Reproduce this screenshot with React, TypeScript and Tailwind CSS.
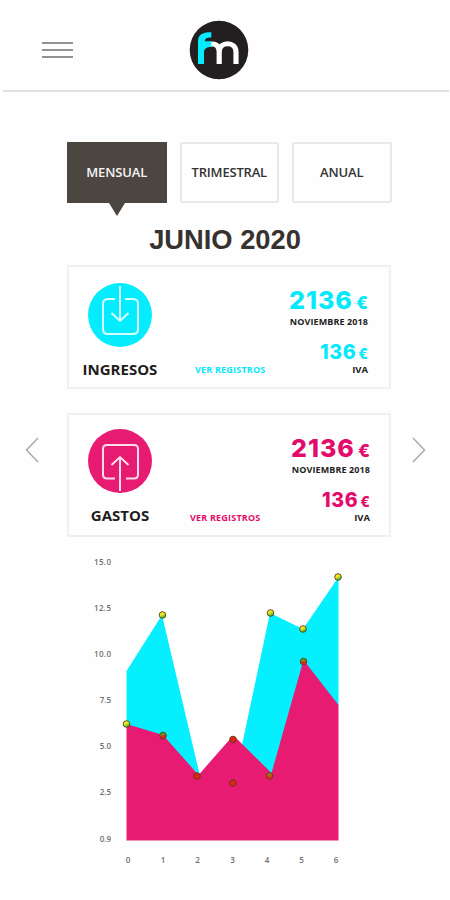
import { useState } from "react";

type Movement = {
  label: string;
  kind: "in" | "out";
  total: string;
  month: string;
  iva: string;
  text: string;
  circle: string;
  card: string;
  link: string;
  side: string;
};

const tabs = [
  { name: "MENSUAL", tracking: "tracking-[-0.1px]" },
  { name: "TRIMESTRAL", tracking: "tracking-[-0.2px]" },
  { name: "ANUAL", tracking: "tracking-[-0.1px]" },
];

const movements: Movement[] = [
  {
    label: "INGRESOS",
    kind: "in",
    total: "2136",
    month: "NOVIEMBRE 2018",
    iva: "136",
    text: "text-[#05e9fb]",
    circle: "bg-[#05ecfe]",
    card: "pt-[16px]",
    link: "ml-[24px]",
    side: "pr-[21px] pt-[3px]",
  },
  {
    label: "GASTOS",
    kind: "out",
    total: "2136",
    month: "NOVIEMBRE 2018",
    iva: "136",
    text: "text-[#e30b6b]",
    circle: "bg-[#e81b73]",
    card: "pt-[14px]",
    link: "ml-[19px]",
    side: "pr-[19px] pt-[5px]",
  },
];

const yAxis = [
  { label: "15.0", y: 15 },
  { label: "12.5", y: 61 },
  { label: "10.0", y: 107 },
  { label: "7.5", y: 153 },
  { label: "5.0", y: 199 },
  { label: "2.5", y: 245 },
  { label: "0.9", y: 292 },
];

const xAxis = [128, 163, 197.5, 232.5, 267, 301.5, 336];

const dots = [
  { x: 126.5, y: 174, fill: "url(#dotYellow)" },
  { x: 162.5, y: 65, fill: "url(#dotYellow)" },
  { x: 270.5, y: 63, fill: "url(#dotYellow)" },
  { x: 303, y: 79, fill: "url(#dotYellow)" },
  { x: 338, y: 27, fill: "url(#dotYellow)" },
  { x: 163, y: 185.5, fill: "url(#dotGreen)" },
  { x: 303.5, y: 111.5, fill: "url(#dotGreen)" },
  { x: 197, y: 226, fill: "#df2413" },
  { x: 233, y: 189.5, fill: "#df2413" },
  { x: 233, y: 233, fill: "#df2413" },
  { x: 269.5, y: 226, fill: "url(#dotOrange)" },
];

function Logo() {
  return (
    <svg width="60" height="60" viewBox="0 0 60 60" fill="none">
      <circle cx="30" cy="30" r="29.3" fill="#231f20" />
      <path d="M21 24.3 C27 23 30.2 26 30.2 32 V44 M30.2 32 C30.2 21 47 21 47 32 V44" stroke="#fff" strokeWidth="5.2" />
      <path d="M9 44 V21 C9 14.5 14 12 22.3 12.2 V17.5 C18 17.4 16 18.4 15.7 21.2 H22.3 V27 C17.5 27 15 29 15 32 V44 Z" fill="#05ecfe" />
    </svg>
  );
}

function MovementIcon({ kind }: { kind: "in" | "out" }) {
  return (
    <svg width="64" height="64" viewBox="0 0 64 64" fill="none" stroke="#fff" strokeOpacity="0.85" strokeWidth="2">
      {kind === "in" ? (
        <>
          <path d="M27 16 H20 Q15 16 15 21 V46 Q15 51 20 51 H45 Q50 51 50 46 V21 Q50 16 45 16 H37" />
          <path d="M32 3 V38 M23.5 30 L32 38 L40.5 30" />
        </>
      ) : (
        <>
          <path d="M27 49.5 H19 Q15 49.5 15 45.5 V20 Q15 16 19 16 H46 Q50 16 50 20 V45.5 Q50 49.5 46 49.5 H38" />
          <path d="M32 62 V28 M23.5 36 L32 28 L40.5 36" />
        </>
      )}
    </svg>
  );
}

function MovementCard({ item }: { item: Movement }) {
  return (
    <section className={`flex h-[124px] w-[324px] border-2 border-[#f0f0f0] ${item.card}`}>
      <div className="flex w-[102px] flex-col items-center">
        <div className={`size-16 rounded-full ${item.circle}`}>
          <MovementIcon kind={item.kind} />
        </div>
        <h2 className="mt-[12px] text-[15px] leading-5 font-bold text-[#1f1d1c]">{item.label}</h2>
      </div>
      <button className={`mb-[11px] self-end text-[9px] leading-3 font-bold whitespace-nowrap tracking-[0.2px] ${item.text} ${item.link}`}>
        VER REGISTROS
      </button>
      <div className={`flex flex-1 flex-col items-end ${item.side}`}>
        <p className={`flex items-baseline gap-[3px] font-[Inter] leading-[28px] font-extrabold ${item.text}`}>
          <span className="text-[25px] tracking-[1px]">{item.total}</span>
          <span className="text-[17.5px]">€</span>
        </p>
        <p className="-mt-px text-[9px] leading-3 font-bold whitespace-nowrap tracking-[0.1px] text-[#222]">{item.month}</p>
        <p className={`mt-[12px] flex items-baseline gap-[2px] font-[Inter] leading-[24px] font-extrabold ${item.text}`}>
          <span className="text-[19.5px] tracking-[0.7px]">{item.iva}</span>
          <span className="text-[14px]">€</span>
        </p>
        <p className="-mt-[2px] text-[9.5px] leading-3 font-bold text-[#222]">IVA</p>
      </div>
    </section>
  );
}

function Chart() {
  return (
    <svg width="450" height="340" viewBox="0 0 450 340" className="block">
      <defs>
        <linearGradient id="dotYellow" x1="0" y1="0" x2="0.5" y2="1">
          <stop offset="0.5" stopColor="#f2e720" />
          <stop offset="1" stopColor="#31b52b" />
        </linearGradient>
        <linearGradient id="dotGreen" x1="0" y1="0" x2="0.3" y2="1">
          <stop offset="0.4" stopColor="#48a82d" />
          <stop offset="0.7" stopColor="#d92c17" />
        </linearGradient>
        <linearGradient id="dotOrange" x1="0" y1="0" x2="0" y2="1">
          <stop offset="0.2" stopColor="#8a8a1c" />
          <stop offset="0.6" stopColor="#dd3414" />
        </linearGradient>
      </defs>
      <path d="M126.5 121 L162 65 L200 226 L163 190 L126.5 175 Z M242 195 L270 63 L303 79 L338.5 27 V156 L303 115 L271 226 Z" fill="#05efff" />
      <path d="M126.5 174 L163 185 L198.5 225 L231 188 H236 L271.5 223 L303.5 110 L338.5 155 V290.5 H126.5 Z" fill="#e81b73" />
      {dots.map((dot, i) => (
        <circle key={i} cx={dot.x} cy={dot.y} r="3.3" fill={dot.fill} stroke="#5b3a1c" strokeWidth="0.9" />
      ))}
      <g fill="#6f6f6f" fontSize="8" fontWeight="600">
        {yAxis.map(tick => (
          <text key={tick.label} x="111" y={tick.y} textAnchor="end" textLength={tick.label.length > 3 ? 17 : undefined}>{tick.label}</text>
        ))}
        {xAxis.map((x, i) => (
          <text key={i} x={x} y="313" textAnchor="middle">{i}</text>
        ))}
      </g>
    </svg>
  );
}

export default function App() {
  const [active, setActive] = useState("MENSUAL");

  return (
    <main className="h-[900px] w-[450px] bg-[#fefefe] font-['Open_Sans',sans-serif]">
      <header className="mr-px ml-[3px] flex h-[92px] items-center border-b-2 border-[#e0e0e0] pt-[10px] pl-[39px]">
        <button aria-label="Menu" className="flex w-[31px] flex-col gap-[5px]">
          <span className="h-[2px] bg-[#929292]" />
          <span className="h-[2px] bg-[#929292]" />
          <span className="h-[2px] bg-[#929292]" />
        </button>
        <div className="ml-[116px]">
          <Logo />
        </div>
      </header>

      <nav className="flex gap-[13px] pt-[50px] pl-[67px]">
        {tabs.map(tab => (
          <button
            key={tab.name}
            onClick={() => setActive(tab.name)}
            className={`relative flex h-[61px] w-[99.5px] items-center justify-center text-[13px] font-semibold ${tab.tracking} ${active === tab.name ? "bg-[#4c4640] text-[#f5f4f3]" : "rounded-[2px] border-2 border-[#e9e9e9] text-[#333]"}`}
          >
            {tab.name}
            {active === tab.name && (
              <span className="absolute top-full left-[42px] border-x-8 border-t-[13px] border-x-transparent border-t-[#4c4640]" />
            )}
          </button>
        ))}
      </nav>

      <h1 className="mt-[22px] text-center font-['Liberation_Sans',sans-serif] text-[27.3px] leading-[30px] font-bold text-[#37322e]">JUNIO 2020</h1>

      <div className="mt-[10px] flex items-center pl-[25px]">
        <button aria-label="Anterior" className="mt-[98px]">
          <svg width="14" height="26" viewBox="0 0 14 26" fill="none" stroke="#aaa" strokeWidth="1.5">
            <path d="M13 1 L1.5 13 L13 25" />
          </svg>
        </button>
        <div className="mr-[21px] ml-[28px] flex flex-col gap-6">
          {movements.map(item => (
            <MovementCard key={item.label} item={item} />
          ))}
        </div>
        <button aria-label="Siguiente" className="mt-[98px]">
          <svg width="14" height="26" viewBox="0 0 14 26" fill="none" stroke="#aaa" strokeWidth="1.5">
            <path d="M1 1 L12.5 13 L1 25" />
          </svg>
        </button>
      </div>

      <div className="mt-[13px]">
        <Chart />
      </div>
    </main>
  );
}
